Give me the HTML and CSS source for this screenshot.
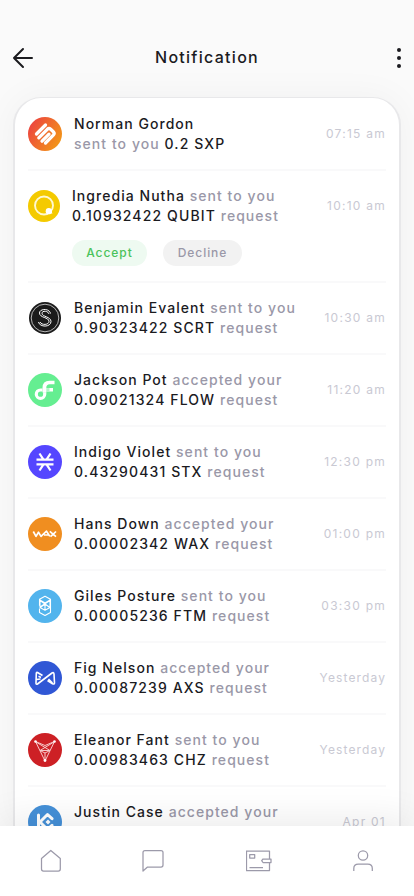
FILE: index.html
```html
<!DOCTYPE html>
<html lang="en">
<head>
<meta charset="utf-8">
<meta name="viewport" content="width=device-width, initial-scale=1">
<title>Notification</title>
<link rel="stylesheet" href="styles.css">
</head>
<body>
<div class="screen">
  <header class="header">
    <svg class="back" width="22" height="22" viewBox="0 0 22 22"><path d="M11 2 2 11l9 9M2 11H20"/></svg>
    <h1>Notification</h1>
    <svg class="more" width="6" height="22" viewBox="0 0 6 22"><circle cx="3" cy="3" r="2"/><circle cx="3" cy="11" r="2"/><circle cx="3" cy="19" r="2"/></svg>
  </header>
  <main class="card">
    <article class="row">
      <svg class="coin" viewBox="0 0 34 34"><defs><linearGradient id="sxp" x1="0" y1=".2" x2="1" y2=".8"><stop offset="0" stop-color="#ec4141"/><stop offset="1" stop-color="#f39b16"/></linearGradient></defs><circle cx="17" cy="17" r="17" fill="url(#sxp)"/><g fill="none" stroke="#fff" stroke-width="3.300" stroke-linecap="round" stroke-linejoin="round"><path d="M17.500 8 8.500 17M10.800 20.800 19.300 12.300q1.700-1.500 3.400 0l2.600 2.400q1.700 1.700 0 3.500L17.500 26M14 24.200l7-7"/></g></svg>
      <p class="text"><b class="name">Norman Gordon</b><br>sent to you <b>0.2 SXP</b></p>
      <time>07:15 am</time>
    </article>
    <article class="row request">
      <svg class="coin small" viewBox="0 0 32 32"><circle cx="16" cy="16" r="16" fill="#f4ca00"/><circle cx="16" cy="15.500" r="9" fill="none" stroke="#fff8d0" stroke-width="1.900"/><circle cx="20.800" cy="21.200" r="3.100" fill="#fff"/><path d="M20.500 23.500h4l-2-4z" fill="#fff"/></svg>
      <p class="text"><b class="name">Ingredia Nutha</b> sent to you<br><b>0.10932422 QUBIT</b> request</p>
      <time>10:10 am</time>
      <div class="actions"><button class="accept">Accept</button><button class="decline">Decline</button></div>
    </article>
    <article class="row">
      <svg class="coin" viewBox="0 0 34 34"><circle cx="17" cy="17" r="16" fill="#1b1b1b"/><circle cx="17" cy="17" r="13.800" fill="none" stroke="#ddd" stroke-width=".8"/><path d="M22.500 12.500c-1-5.500-11-5-11-.5 0 5 9.500 4 9.500 8.500 0 3.500-7.500 4-9 .5M21 13c-1-3.500-7-3.500-7-.8 0 3.800 9 3.300 9 8.300 0 6-11.500 6-12.500.500" fill="none" stroke="#fff" stroke-width="1"/></svg>
      <p class="text"><b class="name">Benjamin Evalent</b> sent to you<br><b>0.90323422 SCRT</b> request</p>
      <time>10:30 am</time>
    </article>
    <article class="row">
      <svg class="coin" viewBox="0 0 34 34"><circle cx="17" cy="17" r="17" fill="#65ee91"/><path d="M14.500 17h-2a4.200 4.200 0 1 0 4.200 4.200v-2" fill="none" stroke="#fff" stroke-width="3.200"/><path d="M14.500 14.900q0-7.100 7-7.100h5v3.500h-4.800q-3.400 0-3.400 3.600h6.700v3.500h-6.700v1h-3.800z" fill="#fff"/><path d="M18.300 15.100h3.200v3.400h-3.200z" fill="#b2f6c8"/></svg>
      <p class="text"><b class="name">Jackson Pot</b> accepted your<br><b>0.09021324 FLOW</b> request</p>
      <time>11:20 am</time>
    </article>
    <article class="row">
      <svg class="coin" viewBox="0 0 34 34"><circle cx="17" cy="17" r="17" fill="#5546ff"/><path d="M8.500 14.700h17M8.500 19.300h17M11.500 8.500l4 6.200M22.500 8.500l-4 6.200M11.500 25.500l4-6.200M22.500 25.500l-4-6.200" fill="none" stroke="#fff" stroke-width="2.200"/></svg>
      <p class="text"><b class="name">Indigo Violet</b> sent to you<br><b>0.43290431 STX</b> request</p>
      <time>12:30 pm</time>
    </article>
    <article class="row">
      <svg class="coin" viewBox="0 0 34 34"><circle cx="17" cy="17" r="17" fill="#f08e20"/><path d="m5.300 14.500 2.700 4.900 2.500-4.200 2.500 4.200 5.500-5.200 3.300 5.200M16 18h4.500M21.800 14.300 28 19.700M22.500 19.700l5.500-5.200" fill="none" stroke="#fff" stroke-width="1.700" stroke-linejoin="round"/></svg>
      <p class="text"><b class="name">Hans Down</b> accepted your<br><b>0.00002342 WAX</b> request</p>
      <time>01:00 pm</time>
    </article>
    <article class="row">
      <svg class="coin" viewBox="0 0 34 34"><circle cx="17" cy="17" r="17" fill="#52b4ed"/><path d="M11.500 19.500v4l5.500 3 5.500-3V10.300l-5.500-3-5.500 3v6.500M12 11l5 3 5-3M12 18.500l5-3.200 5 3.200-5 2.800zM12 11.500v6.500l10-6.500v7zM17 14v7" fill="none" stroke="#fff" stroke-width="1.100" stroke-linejoin="round"/></svg>
      <p class="text"><b class="name">Giles Posture</b> sent to you<br><b>0.00005236 FTM</b> request</p>
      <time>03:30 pm</time>
    </article>
    <article class="row">
      <svg class="coin" viewBox="0 0 34 34"><circle cx="17" cy="17" r="17" fill="#3057d5"/><path d="M14.500 14.500 9.500 11.500q-1-.5-1.200.8l-.3 9.900q0 1.500 1.500.8L24 12q1.800-1 2 1l.5 9q0 1.500-2 .8l-5-3.300M10.500 15.200l2.500 1.300M8.500 18.500l4-.5M24.500 22l-4-4" fill="none" stroke="#fff" stroke-width="1.600" stroke-linejoin="round"/></svg>
      <p class="text"><b class="name">Fig Nelson</b> accepted your<br><b>0.00087239 AXS</b> request</p>
      <time class="day">Yesterday</time>
    </article>
    <article class="row">
      <svg class="coin" viewBox="0 0 34 34"><circle cx="17" cy="17" r="17" fill="#cd2025"/><path d="m7.500 8.500 9.500 19.500L26.500 8.500 17 12.500zM12 17.500 26 9M22 17.500 8 9M12 17.500h10M12 17.500l5 2.500 5-2.500M17 28v-8" fill="none" stroke="#f7c9c9" stroke-width="1"/><g fill="#fff"><circle cx="7.500" cy="8.500" r="1.300"/><circle cx="26.500" cy="8.500" r="1.300"/><circle cx="17" cy="27.500" r="1.400"/></g></svg>
      <p class="text"><b class="name">Eleanor Fant</b> sent to you<br><b>0.00983463 CHZ</b> request</p>
      <time class="day">Yesterday</time>
    </article>
    <article class="row">
      <svg class="coin" viewBox="0 0 34 34"><circle cx="17" cy="17" r="17" fill="#4590d8"/><path d="M10.500 10v14M12 17l7.500-7.500 4.500 4.200M12 17l7.500 7.500 4.500-4.200" fill="none" stroke="#fff" stroke-width="3" stroke-linecap="round" stroke-linejoin="round"/><path d="m20 14.500 2.500 2.500-2.500 2.500-2.500-2.500z" fill="#fff"/></svg>
      <p class="text"><b class="name">Justin Case</b> accepted your<br>&nbsp;</p>
      <time>Apr 01</time>
    </article>
  </main>
  <nav class="tabs">
    <svg width="24" height="24" viewBox="0 0 24 24"><path d="M2.500 9.500 11.800 1.500 21.300 9.500V20q0 2-2 2H4.500q-2 0-2-2z"/></svg>
    <svg width="24" height="24" viewBox="0 0 24 24"><path d="M3 1.500h16q2 0 2 2V16q0 2-2 2H5.500L1 22V3.500q0-2 2-2z"/></svg>
    <svg width="26" height="24" viewBox="0 0 26 24"><path d="M23.500 9.500V2h-23v19.500h23v-7.500M17 10h8v3.500h-8l-1.300-1.800zM3.700 5.500h5v3.500h-5zM3.500 18.500h13.500"/></svg>
    <svg width="24" height="24" viewBox="0 0 24 24"><circle cx="12" cy="6.500" r="4.700"/><path d="M2.800 22v-2.500q0-4.300 4.500-4.300h9.500q4.500 0 4.500 4.300V22"/></svg>
  </nav>
</div>
</body>
</html>
```

FILE: styles.css
```css
* { box-sizing: border-box; }

body {
  margin: 0;
  font-family: Inter, "Liberation Sans", sans-serif;
  color: #1b1b1f;
}

.screen {
  display: flex;
  flex-direction: column;
  height: 896px;
  overflow: hidden;
  background: #fafafa;
}

.header {
  flex: none;
  display: flex;
  align-items: center;
  justify-content: space-between;
  height: 97px;
  padding: 19px 12px 0;
}

.header h1 {
  margin: 0 16px 2px 0;
  font-size: 16px;
  font-weight: 500;
  line-height: 24px;
  letter-spacing: 1.28px;
}

.back { fill: none; stroke: #1b1b1f; stroke-width: 2; stroke-linecap: round; stroke-linejoin: round; }
.more { fill: #1b1b1f; }

.card {
  flex: 1;
  min-height: 0;
  overflow: hidden;
  margin: 0 13px;
  padding: 0 13px;
  border: 2px solid #e8e8ea;
  border-top-width: 1px;
  border-bottom: 0;
  border-radius: 28px 28px 0 0;
  background: #fff;
  box-shadow: 0 0 36px rgba(0, 0, 0, .045);
}

.row {
  display: grid;
  grid-template-columns: 34px 1fr auto;
  column-gap: 12px;
  align-items: center;
  height: 72px;
  border-bottom: 1px solid #f9f9fa;
  box-shadow: 0 1px 0 #f9f9fa;
}

.coin { display: block; width: 34px; height: 34px; }
.coin.small { width: 32px; height: 32px; }

.text {
  margin: 0;
  font-size: 14px;
  font-weight: 500;
  line-height: 20px;
  letter-spacing: 1.05px;
  color: #9a98a8;
  white-space: nowrap;
}

.text b { font-weight: 500; letter-spacing: 1.12px; color: #1b1b1f; }
.text .name { letter-spacing: 1.04px; }

time {
  font-size: 12px;
  line-height: 20px;
  letter-spacing: 1.25px;
  color: #c9c9d3;
}

.day { letter-spacing: 1.12px; }

.request {
  grid-template-columns: 32px 1fr auto;
  grid-template-rows: 40px 26px;
  row-gap: 14px;
  align-content: center;
  height: 112px;
}

.actions { grid-column: 2 / 4; display: flex; gap: 16px; }

.actions button {
  height: 26px;
  padding: 0;
  border: 0;
  border-radius: 13px;
  font-family: inherit;
  font-size: 12px;
  font-weight: 500;
  letter-spacing: .95px;
}

.accept { width: 75px; background: #eefaf1; color: #4bc25b; }
.decline { width: 79px; background: #f2f2f2; color: #9a98a8; }

.tabs {
  flex: none;
  display: flex;
  justify-content: space-between;
  height: 70px;
  padding: 23px 39px 0;
  background: #fff;
  box-shadow: 0 -4px 40px rgba(0, 0, 0, .09);
  z-index: 1;
}

.tabs svg { fill: none; stroke: #9c9aaa; stroke-width: 1.250; stroke-linejoin: round; }
```
